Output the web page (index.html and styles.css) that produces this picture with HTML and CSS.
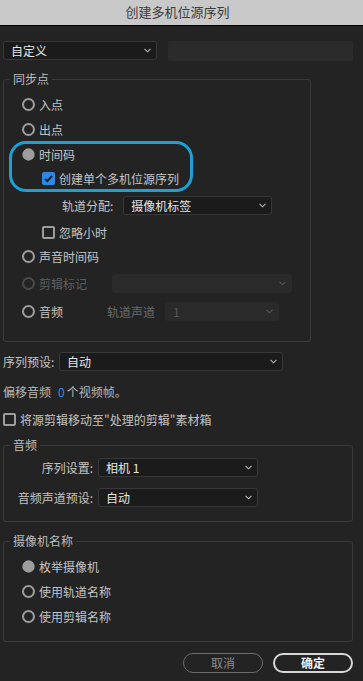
FILE: index.html
```html
<!DOCTYPE html>
<html lang="zh-CN">
<head>
<meta charset="utf-8">
<title>创建多机位源序列</title>
<link rel="stylesheet" href="styles.css">
</head>
<body>
<div class="titlebar">创建多机位源序列</div>
<div class="main">
  <div class="top-row">
    <div class="select sel-preset"><span>自定义</span><svg class="chev" width="7" height="5" viewBox="0 0 7 5"><polyline points="0.5,0.8 3.5,3.8 6.5,0.8" fill="none" stroke="#b5b5b5" stroke-width="1.1"/></svg></div>
    <div class="textfield"></div>
  </div>

  <section class="group group-sync">
    <div class="group-title">同步点</div>
    <div class="row h25"><span class="radio"></span><span>入点</span></div>
    <div class="row h25"><span class="radio"></span><span>出点</span></div>
    <div class="row h25"><span class="radio on"></span><span>时间码</span></div>
    <div class="row h23 indent"><span class="check on"><svg width="13" height="13" viewBox="0 0 13 13"><polyline points="3,6.8 5.4,9.2 10,3.8" fill="none" stroke="#15202b" stroke-width="1.9"/></svg></span><span>创建单个多机位源序列</span></div>
    <div class="row h30"><span class="lbl-track">轨道分配:</span><div class="select sel-track"><span>摄像机标签</span><svg class="chev" width="7" height="5" viewBox="0 0 7 5"><polyline points="0.5,0.8 3.5,3.8 6.5,0.8" fill="none" stroke="#b5b5b5" stroke-width="1.1"/></svg></div></div>
    <div class="row h24 indent"><span class="check"></span><span>忽略小时</span></div>
    <div class="row h24"><span class="radio"></span><span>声音时间码</span></div>
    <div class="row h31 disabled"><span class="radio"></span><span>剪辑标记</span><div class="select dis sel-marker"><span></span><svg class="chev" width="7" height="5" viewBox="0 0 7 5"><polyline points="0.5,0.8 3.5,3.8 6.5,0.8" fill="none" stroke="#555" stroke-width="1.1"/></svg></div></div>
    <div class="row h25"><span class="radio"></span><span>音频</span><span class="lbl-chan">轨道声道</span><div class="select dis sel-chan"><span>1</span><svg class="chev" width="7" height="5" viewBox="0 0 7 5"><polyline points="0.5,0.8 3.5,3.8 6.5,0.8" fill="none" stroke="#555" stroke-width="1.1"/></svg></div></div>
    <div class="highlight"></div>
  </section>

  <div class="row preset-row"><span class="lbl-seq">序列预设:</span><div class="select sel-seq"><span>自动</span><svg class="chev" width="7" height="5" viewBox="0 0 7 5"><polyline points="0.5,0.8 3.5,3.8 6.5,0.8" fill="none" stroke="#b5b5b5" stroke-width="1.1"/></svg></div></div>

  <div class="row offset-row"><span>偏移音频</span><span class="num">0</span><span>个视频帧。</span></div>

  <div class="row move-row"><span class="check"></span><span>将源剪辑移动至"处理的剪辑"素材箱</span></div>

  <section class="group group-audio">
    <div class="group-title">音频</div>
    <div class="row form-row"><span class="form-lbl">序列设置:</span><div class="select sel-form"><span>相机 1</span><svg class="chev" width="7" height="5" viewBox="0 0 7 5"><polyline points="0.5,0.8 3.5,3.8 6.5,0.8" fill="none" stroke="#b5b5b5" stroke-width="1.1"/></svg></div></div>
    <div class="row form-row second"><span class="form-lbl">音频声道预设:</span><div class="select sel-form"><span>自动</span><svg class="chev" width="7" height="5" viewBox="0 0 7 5"><polyline points="0.5,0.8 3.5,3.8 6.5,0.8" fill="none" stroke="#b5b5b5" stroke-width="1.1"/></svg></div></div>
  </section>

  <section class="group group-cam">
    <div class="group-title">摄像机名称</div>
    <div class="row h25"><span class="radio on"></span><span>枚举摄像机</span></div>
    <div class="row h25"><span class="radio"></span><span>使用轨道名称</span></div>
    <div class="row h25"><span class="radio"></span><span>使用剪辑名称</span></div>
  </section>

  <div class="buttons">
    <div class="btn btn-cancel">取消</div>
    <div class="btn btn-ok">确定</div>
  </div>
</div>
</body>
</html>
```

FILE: styles.css
```css
* { box-sizing: border-box; }
html, body { margin: 0; padding: 0; }
body {
  width: 363px;
  height: 681px;
  overflow: hidden;
  background: #232323;
  font-family: "Noto Sans CJK SC", "Noto Sans", sans-serif;
  font-size: 12px;
  line-height: 17px;
  color: #c3c3c3;
}
.titlebar {
  height: 26px;
  background: #c9c9c9;
  border-bottom: 1px solid #000;
  color: #3c3c3c;
  font-size: 13px;
  line-height: 24px;
  text-align: center;
  padding-right: 8px;
}
.main { padding: 0 10px 0 3px; }

.top-row { display: flex; margin-top: 15px; height: 20px; }
.select {
  display: flex;
  align-items: center;
  justify-content: space-between;
  height: 19px;
  background: #1b1b1b;
  border: 1px solid #383838;
  border-radius: 3px;
  padding: 0 5px 0 7px;
  color: #e6e6e6;
  line-height: 17px;
  flex: none;
}
.select.dis { background: #2a2a2a; border-color: #2a2a2a; color: #555; }
.chev { flex: none; }
.sel-preset { width: 154px; }
.textfield {
  width: 185px;
  height: 20px;
  margin-left: 11px;
  background: #2b2b2b;
  border-radius: 2px;
}

.group {
  position: relative;
  border: 1px solid #3a3a3a;
  border-radius: 3px;
}
.group-title {
  position: absolute;
  top: -8px;
  left: 6px;
  padding: 0 3px;
  height: 14px;
  line-height: 14px;
  background: #232323;
  color: #bdbdbd;
}

.row { display: flex; align-items: center; }
.h23 { height: 23px; }
.h24 { height: 24px; }
.h25 { height: 25px; }
.h30 { height: 30px; }
.h31 { height: 31px; }
.indent { margin-left: 20px; }

.radio {
  width: 13px;
  height: 13px;
  border: 2px solid #9d9d9d;
  border-radius: 50%;
  margin-right: 4px;
  flex: none;
}
.radio.on { background: #9d9d9d; border-color: #9d9d9d; transform: scale(0.95); }
.check {
  width: 13px;
  height: 13px;
  border: 2px solid #9d9d9d;
  border-radius: 2px;
  margin-right: 4px;
  flex: none;
}
.check.on { border: none; background: #2f88e6; display: block; }
.check.on svg { display: block; }

.disabled { color: #5e5e5e; }
.disabled .radio { border-color: #4a4a4a; }

.group-sync { width: 308px; margin-top: 18px; padding: 12px 0 17px 18px; }
.lbl-track { margin-left: 40px; }
.sel-track { width: 149px; margin-left: 10px; }
.sel-marker { width: 180px; margin-left: 25px; }
.lbl-chan { margin-left: 44px; color: #6a6a6a; }
.sel-chan { width: 114px; margin-left: 10px; }

.highlight {
  position: absolute;
  left: 5px;
  top: 61px;
  width: 184px;
  height: 51px;
  border: 3px solid #1ba1d9;
  border-radius: 17px;
  pointer-events: none;
}

.preset-row { margin-top: 10px; height: 19px; }
.lbl-seq { width: 56px; flex: none; }
.sel-seq { width: 224px; }

.offset-row { margin-top: 10px; height: 20px; color: #b8b8b8; }
.num { color: #2d8ceb; margin-left: 7px; margin-right: 2px; }

.move-row { margin-top: 7px; height: 22px; }

.group-audio { margin-top: 15px; padding: 12px 0 14px 0; }
.form-row { height: 19px; }
.form-row.second { margin-top: 11px; }
.form-lbl { width: 89px; text-align: right; flex: none; }
.sel-form { width: 160px; margin-left: 5px; }

.group-cam { margin-top: 19px; padding: 12px 0 12px 18px; }

.buttons {
  display: flex;
  justify-content: flex-end;
  gap: 10px;
  margin-top: 11px;
}
.btn {
  width: 80px;
  height: 20px;
  border-radius: 10px;
  text-align: center;
  line-height: 16px;
  font-size: 12px;
}
.btn-cancel { border: 1.5px solid #6b6b6b; color: #8c8c8c; line-height: 17px; }
.btn-ok { border: 2px solid #d6d6d6; color: #f0f0f0; font-weight: bold; }
```
